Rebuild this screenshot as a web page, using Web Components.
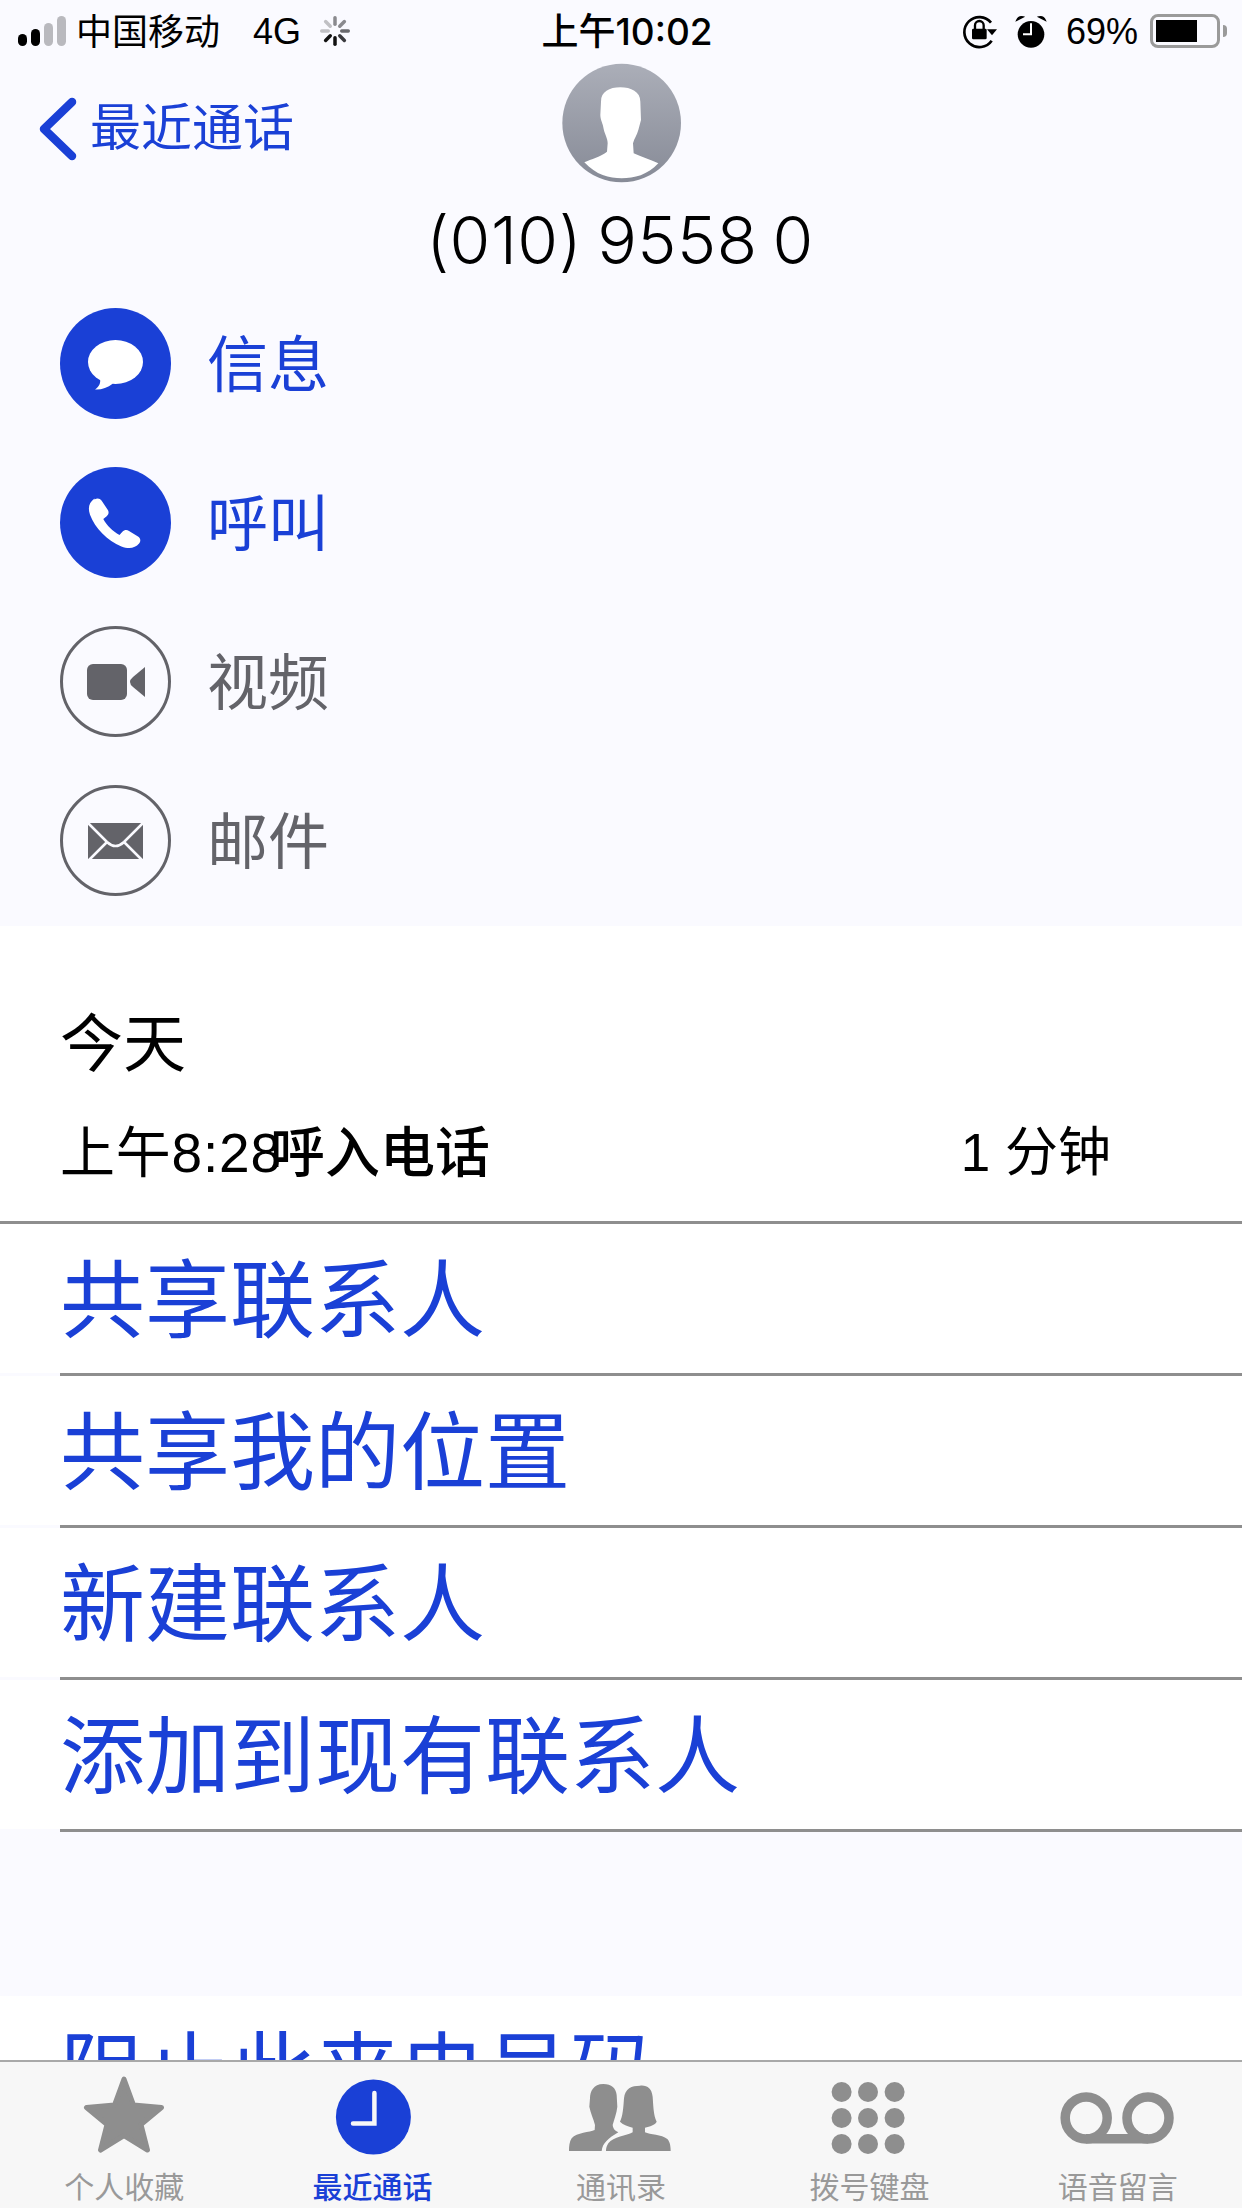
<!DOCTYPE html>
<html lang="zh-CN">
<head>
<meta charset="utf-8">
<title>通话详情</title>
<style>
  html, body { margin: 0; padding: 0; background: #fafaff; }
  body { font-family: "Liberation Sans", "Noto Sans CJK SC", sans-serif; }
</style>
</head>
<body>
<phone-screen>
  <status-bar slot="status"></status-bar>
  <contact-header slot="content" back="最近通话" number="(010) 9558 0"></contact-header>
  <action-list slot="content">
    <action-item kind="message" active>信息</action-item>
    <action-item kind="phone" active>呼叫</action-item>
    <action-item kind="video">视频</action-item>
    <action-item kind="mail">邮件</action-item>
  </action-list>
  <call-log slot="content" day="今天" time="上午8:28" type="呼入电话" duration="1 分钟"></call-log>
  <menu-row slot="content">共享联系人</menu-row>
  <menu-row slot="content">共享我的位置</menu-row>
  <menu-row slot="content">新建联系人</menu-row>
  <menu-row slot="content">添加到现有联系人</menu-row>
  <menu-gap slot="content"></menu-gap>
  <menu-row slot="content">阻止此来电号码</menu-row>
  <tab-bar slot="tabs">
    <tab-item icon="star">个人收藏</tab-item>
    <tab-item icon="clock" active>最近通话</tab-item>
    <tab-item icon="contacts">通讯录</tab-item>
    <tab-item icon="keypad">拨号键盘</tab-item>
    <tab-item icon="voicemail">语音留言</tab-item>
  </tab-bar>
</phone-screen>

<script>
const ACTION_ICONS = {
  message: `
    <ellipse cx="55.5" cy="54" rx="27.5" ry="22" fill="#fff"/>
    <path d="M40 70C41 75 39 79 35 81.500C41 82 47 80 53 75.500Z" fill="#fff"/>`,
  phone: `
    <path fill="#fff" d="M34.500 32.500c2.500-1.700 5.500-1.300 7 1l6.200 9.300c1.500 2.300 1 4.700-1 6.400l-3.400 2.800c3.600 6.600 9.300 12.300 16.200 16l2.900-3.200c1.800-1.900 4.300-2.300 6.600-.9l9 5.700c2.600 1.700 3.100 4.700 1.100 7-4 4.700-10.300 5.800-17.700 2.800-14-5.700-26.300-18-31.400-31.700-2.400-6.600-.9-12.400 4.500-16.200Z"/>`,
  video: `
    <rect x="27" y="38" width="40" height="36" rx="6" fill="#636369"/>
    <path fill="#636369" d="M85 41V71L73 61Q70 58.500 70 56Q70 53.500 73 51Z"/>`,
  mail: `
    <rect x="28" y="38" width="55" height="36" fill="#636369"/>
    <path fill="none" stroke="#fafaff" stroke-width="2.500" d="M27 37L47 57Q55.500 65 64 57L84 37M28 76L46.500 57.500M83 76L64.500 57.500"/>`
};

const TAB_ICONS = {
  star: `<polygon points="62,3 71.500,29 99.500,31.500 79,48.500 85.500,74 62,59.500 38.500,74 45,48.500 24.500,31.500 52.500,29" fill="currentColor" stroke="currentColor" stroke-width="5" stroke-linejoin="round"/>`,
  clock: `
    <circle cx="62.400" cy="41" r="37.500" fill="currentColor"/>
    <path d="M63.400 17V47.500H42" fill="none" stroke="#f7f7f7" stroke-width="4.500" stroke-linecap="round"/>`,
  contacts: `
    <g transform="translate(1,-1) scale(.3333)" fill="currentColor">
      <path d="M130 27C100 27 90 50 90 70L88 95C92 115 100 130 105 150L104 165C90 172 50 172 35 190C28 200 27 215 27 228L125 228C127 205 145 190 175 172C168 168 160 165 158 150C162 135 170 115 172 95L170 60C168 40 155 27 130 27Z"/>
      <path d="M240 32C215 32 195 40 192 70C190 100 188 125 180 140C190 150 205 155 218 158L218 172C200 182 160 185 145 205C140 213 138 220 138 228L332 228C332 215 330 200 322 192C305 178 270 180 255 172L255 158C270 155 285 150 290 140C280 120 280 90 278 65C275 40 262 30 240 32Z"/>
    </g>`,
  keypad: [16, 42, 68].map(y => [34.6, 61, 87.6].map(x => `<circle cx="${x}" cy="${y}" r="10" fill="currentColor"/>`).join('')).join(''),
  voicemail: `
    <circle cx="30.200" cy="42" r="21" fill="none" stroke="currentColor" stroke-width="9.500"/>
    <circle cx="92" cy="42" r="21" fill="none" stroke="currentColor" stroke-width="9.500"/>
    <rect x="30" y="58" width="62" height="9.500" fill="currentColor"/>`
};

class PhoneScreen extends HTMLElement {
  constructor() {
    super();
    this.attachShadow({ mode: 'open' });
    this.shadowRoot.innerHTML = `
      <style>
        :host {
          display: flex;
          flex-direction: column;
          width: 1242px;
          height: 2208px;
          overflow: hidden;
          background: #fafaff;
        }
        .content {
          display: flex;
          flex-direction: column;
          height: 1998px;
          overflow: hidden;
        }
      </style>
      <slot name="status"></slot>
      <div class="content"><slot name="content"></slot></div>
      <slot name="tabs"></slot>
    `;
  }
}

class StatusBar extends HTMLElement {
  constructor() {
    super();
    this.attachShadow({ mode: 'open' });
    const spokes = [
      [0, '#8a8a8e'], [45, '#8a8a8e'], [90, '#6a6a6e'], [135, '#3a3a3e'],
      [180, '#111'], [225, '#111'], [270, '#c0c0c4'], [315, '#c0c0c4']
    ].map(([deg, c]) => `<rect x="13.250" y="0" width="3.500" height="10" rx="1.700" fill="${c}" transform="rotate(${deg} 15 15)"/>`).join('');
    this.shadowRoot.innerHTML = `
      <style>
        :host {
          display: grid;
          grid-template-columns: 1fr auto 1fr;
          align-items: center;
          height: 62px;
          padding: 0 15px 0 18px;
          font-size: 36px;
          color: #000;
          flex: none;
        }
        .left, .right { display: flex; align-items: center; }
        .carrier { margin-left: 10px; margin-bottom: 4px; }
        .net { margin-left: 33px; margin-top: 2px; }
        .spin { margin-left: 19px; }
        svg { display: block; flex: none; }
        .time {
          margin: 0 0 5px 9px;
          font-family: Inter, "Noto Sans CJK SC", sans-serif;
          font-size: 37px;
          font-weight: 500;
          white-space: nowrap;
        }
        .right { justify-content: flex-end; }
        .pct { margin: 2px 0 0 5px; }
        .battery {
          margin-left: 12px;
          display: flex;
          align-items: center;
        }
        .shell {
          box-sizing: border-box;
          width: 70px;
          height: 34px;
          border: 3px solid #9a9a9a;
          border-radius: 8px;
          padding: 3px;
        }
        .fill { width: 41px; height: 22px; background: #000; }
        .cap { width: 4px; height: 12px; background: #9a9a9a; border-radius: 0 4px 4px 0; margin-left: 3px; }
      </style>
      <div class="left">
        <svg width="48" height="30" viewBox="0 0 48 30">
          <rect x="0" y="18" width="9" height="12" rx="4.500" fill="#000"/>
          <rect x="13" y="13" width="9" height="17" rx="4.500" fill="#000"/>
          <rect x="26" y="7" width="9" height="23" rx="4.500" fill="#b9b9be"/>
          <rect x="39" y="0" width="9" height="30" rx="4.500" fill="#b9b9be"/>
        </svg>
        <span class="carrier">中国移动</span>
        <span class="net">4G</span>
        <svg class="spin" width="30" height="30" viewBox="0 0 30 30">${spokes}</svg>
      </div>
      <div class="time">上午10:02</div>
      <div class="right">
        <svg width="110" height="50" viewBox="0 0 330 150">
          <path d="M120 50A45 45 0 1 0 122 104" fill="none" stroke="#000" stroke-width="8"/>
          <path d="M108 70H138L123 88Z" fill="#000"/>
          <rect x="63" y="68" width="44" height="32" rx="4" fill="#000"/>
          <path d="M72 70V58A13 13 0 0 1 98 58V70" fill="none" stroke="#000" stroke-width="7"/>
          <circle cx="240" cy="85" r="40" fill="#000"/>
          <path d="M240 52V85H216" fill="none" stroke="#fff" stroke-width="6"/>
          <path d="M197 43Q203 29 217 33Z M283 43Q277 29 263 33Z" fill="#000" stroke="#000" stroke-width="4"/>
        </svg>
        <span class="pct">69%</span>
        <div class="battery">
          <div class="shell"><div class="fill"></div></div>
          <div class="cap"></div>
        </div>
      </div>
    `;
  }
}

class ContactHeader extends HTMLElement {
  constructor() {
    super();
    this.attachShadow({ mode: 'open' });
    this.shadowRoot.innerHTML = `
      <style>
        :host {
          display: block;
          flex: none;
          background: #fafaff;
        }
        .top {
          display: grid;
          grid-template-columns: 1fr 140px 1fr;
          align-items: center;
        }
        .back {
          display: flex;
          align-items: center;
          gap: 13px;
          margin: 6px 0 0 38px;
          color: #1a40d6;
          font-size: 51px;
          line-height: 62px;
        }
        svg { display: block; }
        .number {
          font-family: Inter, "Liberation Sans", sans-serif;
          font-weight: 350;
          font-size: 66px;
          letter-spacing: .5px;
          word-spacing: -4px;
          line-height: 80px;
          text-align: center;
          color: #000;
          padding: 10px 2px 28px 0;
          white-space: pre;
        }
      </style>
      <div class="top">
        <div class="back">
          <svg width="39" height="64" viewBox="0 0 39 64">
            <path d="M34 5L6 32L34 59" fill="none" stroke="#1a40d6" stroke-width="8.500" stroke-linecap="round" stroke-linejoin="round"/>
          </svg>
          <span id="back"></span>
        </div>
        <svg width="140" height="135" viewBox="0 0 420 405" style="margin-top:-7px">
          <defs>
            <linearGradient id="face" x1="0" y1="0" x2="0" y2="1">
              <stop offset="0" stop-color="#abaeb8"/>
              <stop offset="1" stop-color="#878b97"/>
            </linearGradient>
          </defs>
          <circle cx="212" cy="204" r="178" fill="url(#face)"/>
          <path fill="#fff" d="M208 97C175 97 150 110 150 140L148 180C148 195 156 205 158 222C162 240 170 250 170 265L168 290C150 305 120 312 100 322C135 360 175 370 212 370C250 370 290 360 322 325C300 315 270 305 248 295L246 265C250 250 258 240 262 225L270 195L268 140C268 110 240 97 208 97Z"/>
        </svg>
        <div></div>
      </div>
      <div class="number" id="number"></div>
    `;
  }

  connectedCallback() {
    this.shadowRoot.getElementById('back').textContent = this.getAttribute('back');
    this.shadowRoot.getElementById('number').textContent = this.getAttribute('number');
  }
}

class ActionList extends HTMLElement {
  constructor() {
    super();
    this.attachShadow({ mode: 'open' });
    this.shadowRoot.innerHTML = `
      <style>
        :host {
          display: flex;
          flex-direction: column;
          flex: none;
          gap: 48px;
          padding: 0 0 30px 60px;
          background: #fafaff;
        }
      </style>
      <slot></slot>
    `;
  }
}

class ActionItem extends HTMLElement {
  constructor() {
    super();
    this.attachShadow({ mode: 'open' });
  }

  connectedCallback() {
    const active = this.hasAttribute('active');
    const color = active ? '#1a40d6' : '#636369';
    const disc = active
      ? `<circle cx="55.500" cy="55.500" r="55.500" fill="${color}"/>`
      : `<circle cx="55.500" cy="55.500" r="54" fill="none" stroke="${color}" stroke-width="3"/>`;
    this.shadowRoot.innerHTML = `
      <style>
        :host {
          display: flex;
          align-items: center;
          gap: 36px;
          height: 111px;
          font-size: 61px;
          color: ${color};
        }
        svg { display: block; flex: none; }
        span { margin-bottom: 6px; }
      </style>
      <svg width="111" height="111" viewBox="0 0 111 111">${disc}${ACTION_ICONS[this.getAttribute('kind')]}</svg>
      <span><slot></slot></span>
    `;
  }
}

class CallLog extends HTMLElement {
  constructor() {
    super();
    this.attachShadow({ mode: 'open' });
  }

  connectedCallback() {
    this.shadowRoot.innerHTML = `
      <style>
        :host {
          display: block;
          flex: none;
          box-sizing: border-box;
          background: #fff;
          color: #000;
          border-bottom: 3px solid #8e8e8e;
          padding: 78px 131px 33px 60px;
        }
        .day { font-size: 63px; line-height: 80px; }
        .row {
          display: grid;
          grid-template-columns: 210px 1fr auto;
          margin-top: 34px;
          font-size: 55px;
          line-height: 70px;
          white-space: nowrap;
        }
        .time { letter-spacing: .8px; }
        .type { font-weight: 500; }
        .duration { font-size: 53px; }
      </style>
      <div class="day">${this.getAttribute('day')}</div>
      <div class="row">
        <span class="time">${this.getAttribute('time')}</span>
        <span class="type">${this.getAttribute('type')}</span>
        <span class="duration">${this.getAttribute('duration')}</span>
      </div>
    `;
  }
}

class MenuRow extends HTMLElement {
  constructor() {
    super();
    this.attachShadow({ mode: 'open' });
    this.shadowRoot.innerHTML = `
      <style>
        :host {
          display: block;
          flex: none;
          background: #fff;
          color: #1a40d6;
          font-size: 85px;
        }
        .text {
          display: flex;
          align-items: center;
          box-sizing: border-box;
          height: 149px;
          padding: 0 0 11px 60px;
          white-space: nowrap;
        }
        .rule {
          height: 3px;
          background: linear-gradient(to right, #fafaff 60px, #8e8e8e 60px);
        }
      </style>
      <div class="text"><slot></slot></div>
      <div class="rule"></div>
    `;
  }
}

class MenuGap extends HTMLElement {
  constructor() {
    super();
    this.attachShadow({ mode: 'open' });
    this.shadowRoot.innerHTML = `
      <style>
        :host { display: block; flex: none; height: 164px; background: #fafaff; }
      </style>
    `;
  }
}

class TabBar extends HTMLElement {
  constructor() {
    super();
    this.attachShadow({ mode: 'open' });
    this.shadowRoot.innerHTML = `
      <style>
        :host {
          display: grid;
          grid-template-columns: repeat(5, 1fr);
          box-sizing: border-box;
          height: 148px;
          flex: none;
          background: #f7f7f7;
          border-top: 2px solid #a9a9a9;
          padding-top: 14px;
        }
      </style>
      <slot></slot>
    `;
  }
}

class TabItem extends HTMLElement {
  constructor() {
    super();
    this.attachShadow({ mode: 'open' });
  }

  connectedCallback() {
    const active = this.hasAttribute('active');
    this.shadowRoot.innerHTML = `
      <style>
        :host {
          display: flex;
          flex-direction: column;
          align-items: center;
          color: ${active ? '#1a40d6' : '#8e8e8e'};
        }
        svg { display: block; }
        .label {
          margin-top: 14px;
          font-size: 30px;
          line-height: 36px;
          color: ${active ? '#1a40d6' : '#999'};
          font-weight: ${active ? 500 : 400};
        }
      </style>
      <svg width="124" height="80" viewBox="0 0 124 80">${TAB_ICONS[this.getAttribute('icon')]}</svg>
      <div class="label"><slot></slot></div>
    `;
  }
}

customElements.define('phone-screen', PhoneScreen);
customElements.define('status-bar', StatusBar);
customElements.define('contact-header', ContactHeader);
customElements.define('action-list', ActionList);
customElements.define('action-item', ActionItem);
customElements.define('call-log', CallLog);
customElements.define('menu-row', MenuRow);
customElements.define('menu-gap', MenuGap);
customElements.define('tab-bar', TabBar);
customElements.define('tab-item', TabItem);
</script>
</body>
</html>
